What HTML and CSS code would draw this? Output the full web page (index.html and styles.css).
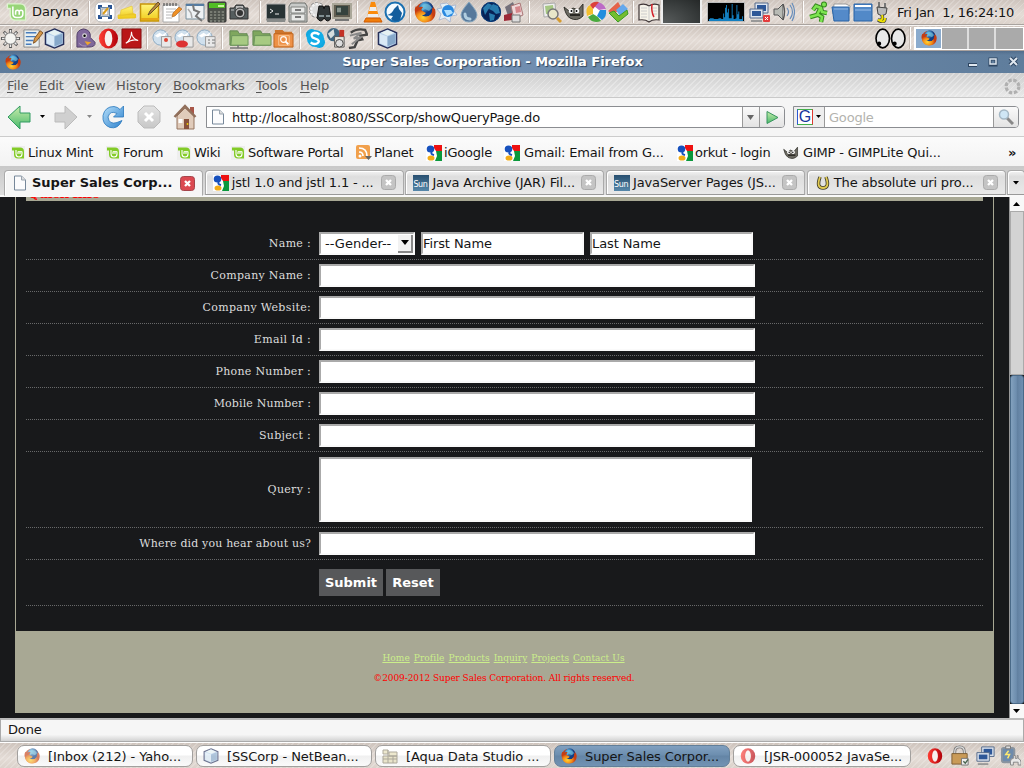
FILE: index.html
```html
<!DOCTYPE html>
<html lang="en">
<head>
<meta charset="utf-8">
<title>Super Sales Corporation - Mozilla Firefox</title>
<link rel="stylesheet" href="styles.css">
</head>
<body>
<svg class="defs" width="0" height="0" aria-hidden="true">
<defs>
<linearGradient id="gBlue" x2="1" y2="1"><stop stop-color="#b8e0fa"/><stop offset="1" stop-color="#2a80cd"/></linearGradient>
<linearGradient id="gYellow" x2="0" y2="1"><stop stop-color="#fff47a"/><stop offset="1" stop-color="#f0cb19"/></linearGradient>
<linearGradient id="gGreen" x2="0" y2="1"><stop stop-color="#c9ecac"/><stop offset="1" stop-color="#48b96b"/></linearGradient>
<linearGradient id="gGrey" x2="0" y2="1"><stop stop-color="#e3e3e3"/><stop offset="1" stop-color="#c7c7c7"/></linearGradient>
<radialGradient id="gGlobe" cx=".35" cy=".3"><stop stop-color="#69c8f2"/><stop offset="1" stop-color="#123f85"/></radialGradient>
<radialGradient id="gFox" cx=".4" cy=".7"><stop stop-color="#ffd531"/><stop offset=".6" stop-color="#f38b18"/><stop offset="1" stop-color="#c63d12"/></radialGradient>
<linearGradient id="gRed" x2="1"><stop stop-color="#ff3e34"/><stop offset="1" stop-color="#b10009"/></linearGradient>
</defs>
<symbol id="mint" viewBox="0 0 22 22"><path d="M1 2h14q6 0 6 6v12H10q-6 0-6-6V7H1z" fill="#97d578" stroke="#e0f3d2" stroke-width="1.500"/><path d="M7 5v8q0 4 4 4h3q4 0 4-4v-2q0-2-2-2t-2 2v3m0-3q0-2-2-2t-2 2v3" fill="none" stroke="#fff" stroke-width="1.700"/></symbol>
<symbol id="bmint" viewBox="0 0 14 14"><rect width="14" height="14" fill="#eee"/><path d="M1 1.500h8q4 0 4 4V12.500H7q-4 0-4-4V4.500H1z" fill="#83cb28"/><path d="M5 4v4q0 3 3 3 3 0 3-3V6q-1-1-2 0v2-2q-1-1-2 0v2" fill="none" stroke="#fff" stroke-width="1.100"/></symbol>
<symbol id="desktop" viewBox="0 0 22 22"><rect x="1" y="1" width="20" height="20" rx="6" fill="#fff" stroke="#bbb"/><path d="M5 8V5h3M14 5h3v3M17 14v3h-3M8 17H5v-3" fill="none" stroke="#285393" stroke-width="2"/><rect x="6.500" y="6.500" width="9" height="9" fill="#dfeaf3" stroke="#6d8cad"/><rect x="8" y="8" width="6" height="6" fill="#fff" stroke="#999"/><path d="M9 13l5-6" stroke="#d99b18" stroke-width="2"/></symbol>
<symbol id="notes" viewBox="0 0 22 22"><path d="M2 14l15-2 3 1v4l-18 1z" fill="#efc923"/><path d="M5 9l11-4 1 7-13 3zM2 14h17v3H2z" fill="url(#gYellow)" stroke="#e5c22c" stroke-width=".6"/></symbol>
<symbol id="sticky" viewBox="0 0 22 22"><rect x="1.500" y="3" width="18" height="17" fill="url(#gYellow)" stroke="#c7950b" stroke-width="1.500"/><path d="M2 18h18" stroke="#e7a519" stroke-width="2"/><path d="M9 14l2-4 8-9 2 2-9 9z" fill="#b9883d" stroke="#4b3a25" stroke-width=".8"/></symbol>
<symbol id="notepad" viewBox="0 0 22 22"><path d="M2 4h16v17H2z" fill="#fff" stroke="#aaa"/><path d="M3 2v3m3-3v3m3-3v3m3-3v3m3-3v3" stroke="#555" stroke-width="1.200"/><path d="M5 8h10M5 11h8M5 14h7M5 17h6" stroke="#999" stroke-width=".7"/><path d="M11 16l1-4 6-6 3 2-7 7z" fill="#ee9025" stroke="#a6601d" stroke-width=".6"/></symbol>
<symbol id="crack" viewBox="0 0 22 22"><path d="M2 3h18v15H2z" fill="#eef2f4" stroke="#788f9c"/><path d="M2 4h18" stroke="#557ca2" stroke-width="2"/><path d="M9 4l1 5 5 2-3 4 6 5" fill="none" stroke="#777" stroke-width="2"/><path d="M4 8l3 4 1 5" fill="none" stroke="#aaa" stroke-width="1.500"/></symbol>
<symbol id="calc" viewBox="0 0 22 22"><rect x="2" y="1" width="18" height="20" rx="1" fill="#4d514b" stroke="#333"/><path d="M3 2h16v5H3z" fill="#51bd24"/><path d="M12 5h6" stroke="#c9f59f" stroke-width="2"/><path d="M4 11h14M4 14h14M4 17h14M4 20h14" stroke="#868b81" stroke-width="1.500" stroke-dasharray="2.300 1.600"/></symbol>
<symbol id="camera" viewBox="0 0 22 22"><path d="M2 7h4l2-3h7l2 3h3v11H2z" fill="#555d5e" stroke="#333"/><path d="M8 5h7v3H8z" fill="#bbb"/><circle cx="12" cy="12" r="5" fill="#bbb" stroke="#333"/><circle cx="12" cy="12" r="3" fill="#333"/><path d="M3 9h3" stroke="#bbb"/></symbol>
<symbol id="terminal" viewBox="0 0 22 22"><rect x="1.500" y="3" width="19" height="15" rx="1" fill="#283335" stroke="#aaa"/><path d="M1 18h20l-1 3H2z" fill="#888b8a"/><path d="M5 8l3 2-3 2m5 1h4" fill="none" stroke="#eee"/></symbol>
<symbol id="cabinet" viewBox="0 0 22 22"><path d="M4 2h14l2 3v16H2V5z" fill="#c8cac8" stroke="#6d706d"/><path d="M4 6h14v6H4zM4 13h14v7H4z" fill="#e8e9e7" stroke="#818380"/><path d="M8 9h6M8 16h6" stroke="#777" stroke-width="2"/></symbol>
<symbol id="binoc" viewBox="0 0 22 22"><circle cx="8" cy="9" r="6" fill="none" stroke="#888" stroke-width="4" stroke-dasharray="2.700 1"/><circle cx="8" cy="9" r="6" fill="#ddd" stroke="#f2f2f2" stroke-width="2.500" stroke-dasharray="2.700 1"/><path d="M10 5h4l1 3 1-3h4l2 12q-3 6-7 0-3 6-7 0z" fill="#303637" stroke="#111"/><path d="M10 15h5m2 0h4" stroke="#829093" stroke-width="2"/></symbol>
<symbol id="monitor" viewBox="0 0 22 22"><path d="M2 3h18v14H2z" fill="#625e51" stroke="#aaa799" stroke-width="2"/><path d="M5 5h12v9H5z" fill="#35423d"/><path d="M6 8h4m-4 2h4M7 6.500v5m2-5v5" stroke="#c5d1c8" stroke-width=".7"/><path d="M4 19h14" stroke="#777" stroke-width="2"/></symbol>
<symbol id="cone" viewBox="0 0 22 22"><path d="M9 1h4l4 15H5z" fill="#fb8b0b"/><path d="M8 6h6l1 4H7zM6 13h10l1 3H5z" fill="#eee"/><path d="M4 17h14l2 4H2z" fill="#f07d0a" stroke="#d05a00"/></symbol>
<symbol id="wolf" viewBox="0 0 22 22"><circle cx="11" cy="11" r="9.500" fill="#f5fbff" stroke="#1a70b1" stroke-width="2"/><path d="M3 14q5-1 7-6l4-4 1 4 3 4-2 7q-5 3-9-1l2-3z" fill="#135d9c"/></symbol>
<symbol id="firefox" viewBox="0 0 22 22"><circle cx="11" cy="11" r="10" fill="url(#gFox)"/><circle cx="12" cy="8" r="7.500" fill="url(#gGlobe)"/><path d="M10 3q5-1 8 4l-3 3-4-2-3 2-1-4z" fill="#71bdd9" opacity=".7"/><path d="M2 5l2 2q2-2 5-1L7 9l5 3q-3 4-6 1 3 5 9 2 4-3 3-8l3 1q2 8-4 12-9 4-14-3Q-1 9 2 5z" fill="url(#gFox)"/></symbol>
<symbol id="swift" viewBox="0 0 22 22"><path d="M11 2l3 3 6-1-2 6 3 4-6 1-1 6-5-4-6 2 2-6-4-5 5-1-2-4z" fill="#e5eff5" stroke="#9ac" stroke-width=".7"/><circle cx="12" cy="10" r="6" fill="#2988df"/><path d="M8 9h7l2 3-6 3z" fill="#addfff"/></symbol>
<symbol id="drop" viewBox="0 0 22 22"><path d="M11 1q8 9 8 13-1 7-8 7t-8-7q0-4 8-13z" fill="#56789b" stroke="#87a6bd"/><path d="M7 13q0 5 5 5" fill="none" stroke="#b0cde0" stroke-width="3" stroke-linecap="round"/></symbol>
<symbol id="globe" viewBox="0 0 22 22"><circle cx="11" cy="11" r="10" fill="#082155"/><path d="M3 7l5-5 4 2-4 5-3 5zM13 3l5 2 2 7-4 1-3-3-4-2zM9 12l6 2-1 5-4 1z" fill="#287bad"/><circle cx="11" cy="11" r="9.500" fill="none" stroke="#073c7b"/></symbol>
<symbol id="cards" viewBox="0 0 22 22"><path d="M3 6l8-5 4 10-9 4z" fill="#74707a"/><path d="M9 5l9-3 3 12-9 4z" fill="#eed7d8" stroke="#a77"/><path d="M13 6l5-1 1 6-5 1z" fill="#d5868b"/><path d="M2 14l8-2v7l-8 1z" fill="#9c2936"/><path d="M10 14h8v7h-8z" fill="#ddd" stroke="#777"/></symbol>
<symbol id="photos" viewBox="0 0 22 22"><path d="M2 3l12-1 1 13-12 1z" fill="#eee" stroke="#aaa"/><path d="M4 5l8-1 1 8-8 1z" fill="#a6c783"/><circle cx="12" cy="13" r="5" fill="#e8e7c9" stroke="#777" stroke-width="1.500"/><path d="M16 17l4 4" stroke="#d49b31" stroke-width="3"/></symbol>
<symbol id="gimp" viewBox="0 0 22 22"><path d="M1 6l5 4 4-3 5 2 5-6v12q-6 6-13 2-4-2-6-11z" fill="#6b6961" stroke="#34342f"/><circle cx="8" cy="10" r="2.300" fill="#fff"/><circle cx="14" cy="10" r="2.300" fill="#fff"/><circle cx="8.500" cy="10" r="1"/><circle cx="13.500" cy="10" r="1"/><path d="M7 14h10" stroke="#292824" stroke-width="2"/></symbol>
<symbol id="picasa" viewBox="0 0 22 22"><circle cx="11" cy="11" r="9" fill="#fff"/><path d="M11 1q7 0 10 7l-7 1-5-4z" fill="#bc6ac6"/><path d="M21 9q1 7-4 10l-5-4 3-6z" fill="#218ddd"/><path d="M16 20q-9 3-13-4l5-3 5 3z" fill="#4aaa3e"/><path d="M2 15Q0 6 5 4l3 4v5z" fill="#f4c02e"/><path d="M5 4q3-4 9-3l-6 7z" fill="#dc3f3b"/></symbol>
<symbol id="boxes" viewBox="0 0 22 22"><path d="M1 10l10-9 3 5-7 8z" fill="#e56349"/><path d="M9 9l7-6 5 5-8 7z" fill="#63a8ed"/><path d="M2 12l5-2 5 5 8-6 1 4-10 8z" fill="#75bd30" stroke="#399b28"/></symbol>
<symbol id="book" viewBox="0 0 22 22"><path d="M1 4q6-2 10 1 4-3 10-1v15q-6-1-10 2-4-3-10-2z" fill="#f6f3e9" stroke="#3e3436" stroke-width="1.200"/><path d="M11 5v15M3 7h6m-6 3h6m-6 3h6m-6 3h6m5-9h5m-5 3h5m-5 3h5" stroke="#ccc"/><path d="M14 3q-1 8 2 13" stroke="#d5242d" stroke-width="1.500" fill="none"/></symbol>
<symbol id="network" viewBox="0 0 22 22"><path d="M7 2h13v10H7z" fill="#dde4ee" stroke="#566b8b"/><path d="M9 4h9v6H9z" fill="#2d5798"/><path d="M2 8h13v9H2z" fill="#dde4ee" stroke="#566b8b"/><path d="M4 10h9v5H4z" fill="#2d5798"/><path d="M3 20h11" stroke="#999" stroke-width="2"/></symbol>
<symbol id="speaker" viewBox="0 0 22 22"><path d="M1 8h4l5-5v16l-5-5H1z" fill="#b8bbb5" stroke="#555"/><path d="M10 3q3 8 0 16" fill="#ddd" stroke="#555" stroke-width="1.500"/><path d="M14 7q3 4 0 8m3-11q5 7 0 14m2-16q5 9 0 18" fill="none" stroke="#698eba" stroke-width="1.200"/></symbol>
<symbol id="runner" viewBox="0 0 22 22"><g fill="none" stroke="#348a1c" stroke-width="4.500"><path d="M5 9l3-4 5 2 1 4 5 1M12 8l-3 6-7 2M9 13l5 3-1 5"/></g><circle cx="16" cy="3.500" r="3" fill="#348a1c"/><g fill="none" stroke="#7de451" stroke-width="2.500"><path d="M5 9l3-4 5 2 1 4 5 1M12 8l-3 6-7 2M9 13l5 3-1 5"/></g><circle cx="16" cy="3.500" r="2" fill="#7de451"/></symbol>
<symbol id="bfolder" viewBox="0 0 22 22"><path d="M4 3h12l4 2-1 8H3z" fill="#fff" stroke="#999"/><path d="M2 6h17v14H4z" fill="#548ac9" stroke="#2863a5"/><path d="M4 8h14" stroke="#92b8e4"/></symbol>
<symbol id="wfolder" viewBox="0 0 22 22"><path d="M2 3h18v17H2z" fill="#5289c8" stroke="#2863a5"/><path d="M3 4h16v2H3z" fill="#fff"/><path d="M3 9h16" stroke="#96bce8"/></symbol>
<symbol id="plug" viewBox="0 0 16 22"><path d="M5 1v6m6-5v5" stroke="#777" stroke-width="2"/><path d="M3 6l10 1-1 6-4 2-4-2z" fill="#bbb" stroke="#444"/><path d="M8 14q2 6-4 5 7 4 7-2" fill="none" stroke="#444" stroke-width="3.500"/><path d="M8 14q2 6-4 5 7 4 7-2" fill="none" stroke="#eee100" stroke-width="2"/></symbol>
<symbol id="sun" viewBox="0 0 22 22"><path d="M11 1v20M1 11h20M4 4l14 14M4 18L18 4" stroke="#555" stroke-width="3"/><path d="M11 2v18M2 11h18M4.700 4.700l12.600 12.600M4.700 17.300L17.300 4.700" stroke="#eee" stroke-width="1.500"/><circle cx="11" cy="11" r="6" fill="#f4f4f1" stroke="#777"/></symbol>
<symbol id="editor" viewBox="0 0 22 22"><path d="M2 2h16v18H2z" fill="#e9efef" stroke="#888"/><path d="M4 5h11M4 9h11M4 13h8M4 17h6" stroke="#487cbc" stroke-width="1.500"/><path d="M12 16l1-5 6-8 3 2-7 9z" fill="#d79848" stroke="#805323"/></symbol>
<symbol id="cube" viewBox="0 0 22 22"><path d="M11 1l9.500 4v12L11 21 1.500 17V5z" fill="#b6d0ea" stroke="#262f5a" stroke-width="1.500"/><path d="M3 6l8 3v10l-8-3z" fill="#d9e9f6"/><path d="M11 9l8-3v10l-8 3z" fill="#86a8ca"/><path d="M4 5l7-3 7 3-7 3z" fill="#e6f2f3"/></symbol>
<symbol id="pidgin" viewBox="0 0 22 22"><path d="M2 20V8q0-6 7-7 8 1 7 9l5 5q1 5-7 5z" fill="#80689b" stroke="#503e68"/><circle cx="10" cy="8" r="2.500" fill="#ddd"/><circle cx="10" cy="8" r="1.300"/><path d="M10 14l7 1-4 3z" fill="#eda52d"/><path d="M4 16q4 4 8 3" fill="none" stroke="#b09bbf"/></symbol>
<symbol id="opera" viewBox="0 0 22 22"><ellipse cx="11" cy="11" rx="10" ry="10.500" fill="url(#gRed)"/><ellipse cx="11" cy="11" rx="4" ry="8" fill="#f6f1ef"/></symbol>
<symbol id="acrobat" viewBox="0 0 22 22"><path d="M1 1h20v20H1z" fill="#b91618" stroke="#830f12"/><path d="M5 16q6-4 6-12 0 7 7 9-6-2-13 3z" fill="none" stroke="#fff" stroke-width="1.100"/></symbol>
<symbol id="office" viewBox="0 0 22 22"><circle cx="9" cy="10" r="8" fill="#d0e0ed" stroke="#8ba9c2"/><path d="M3 8l5-3 3 2 5-3-3 5-4-1-3 2z" fill="#fff"/><path d="M10 9h10v11H10z" fill="#e9e9e9" stroke="#999"/></symbol>
<symbol id="gfolder" viewBox="0 0 22 22"><path d="M2 3h8l2 3h8v12H2z" fill="#7fa75e" stroke="#638753"/><path d="M4 8h17v10H3z" fill="#a7ca82" stroke="#6b945a"/></symbol>
<symbol id="sfolder" viewBox="0 0 22 22"><path d="M2 2h8l2 2h8v16H2z" fill="#cc752d"/><path d="M1 6h20v14H1z" fill="#ee9147" stroke="#bd641d"/><circle cx="11" cy="12" r="3" fill="none" stroke="#fff" stroke-width="1.200"/><path d="M6 8h11v10H6z" fill="none" stroke="#f9c796"/><path d="M13 14l3 3" stroke="#fff" stroke-width="2"/></symbol>
<symbol id="skype" viewBox="0 0 22 22"><circle cx="7" cy="7" r="6" fill="#10a7df"/><circle cx="15" cy="15" r="6" fill="#10a7df"/><circle cx="11" cy="11" r="9" fill="#12ade7"/><path d="M15 7q-2-2-5-2-5 1-2 5l5 2q3 2 0 4-4 2-7-1" fill="none" stroke="#fff" stroke-width="2.500"/></symbol>
<symbol id="kopete" viewBox="0 0 22 22"><circle cx="8" cy="7" r="7" fill="#406680"/><path d="M2 6l6-5 1 6-4 4z" fill="#d6dfdf"/><path d="M9 9h10v11H9z" fill="#e7e4dc" stroke="#555"/><path d="M14 2h5v7h-5z" fill="#c43125"/><circle cx="14" cy="16" r="4" fill="#ddd" stroke="#444"/></symbol>
<symbol id="metal" viewBox="0 0 22 22"><path d="M4 5q6-5 15-3l2 5-7 1 2 4-5 1-3 7-6 1" fill="none" stroke="#444" stroke-width="2.500"/><path d="M3 8l12-3-8 6 7-1-9 7" fill="none" stroke="#888" stroke-width="2"/></symbol>
<symbol id="google" viewBox="0 0 16 16"><path d="M0 0h16v16H0z" fill="#fff"/><path d="M8 0h8v6h-6L8 3z" fill="#e11"/><path d="M10 6h6v10H9l2-5z" fill="#0a983c"/><ellipse cx="4.500" cy="4" rx="3.800" ry="3.500" fill="#1650bd"/><ellipse cx="5" cy="13" rx="3.500" ry="2.600" fill="#f2ac17"/><path d="M6 7q-2 2 2 3" fill="none" stroke="#1650bd" stroke-width="2"/></symbol>
<symbol id="page" viewBox="0 0 14 16"><path d="M1.500 1h7l4 4v10h-11z" fill="#fcfcfd" stroke="#77889a"/><path d="M8.500 1v4h4" fill="#ddd" stroke="#9aa5b0"/></symbol>
<symbol id="rss" viewBox="0 0 16 16"><rect width="14" height="14" rx="2" fill="#f1a04c"/><circle cx="4" cy="11" r="1.500" fill="#fff"/><path d="M3 7q4 0 4 4M3 3q8 0 8 8" stroke="#fff" stroke-width="1.700" fill="none"/><path d="M9 11h7l-3.500 4z" fill="#666"/></symbol>
<symbol id="horseshoe" viewBox="0 0 16 16"><path d="M5 2q-4 11 3 11t3-11" fill="none" stroke="#3f3c29" stroke-width="3.500"/><path d="M5 2q-4 11 3 11t3-11" fill="none" stroke="#e2cb52" stroke-width="1.800"/></symbol>
<symbol id="close" viewBox="0 0 15 15"><rect x=".5" y=".5" width="14" height="14" rx="3"/><path d="M5 5l5 5m0-5l-5 5" stroke="#fff" stroke-width="2.300"/></symbol>
<symbol id="tree" viewBox="0 0 16 16"><path d="M1 2h5v4H1zM7 4h8v4H7zM1 8h14v7H1z" fill="#e4dcb4" stroke="#857e6a"/><path d="M1 11h14M6 2v13m5-7v7" stroke="#857e6a"/></symbol>
<symbol id="lock" viewBox="0 0 22 22"><path d="M5 10V7q0-5 5-5t5 5v3" fill="none" stroke="#777" stroke-width="3"/><path d="M5 10V7q0-5 5-5t5 5v3" fill="none" stroke="#ddd" stroke-width="1.300"/><path d="M2 9h16v11H2z" fill="#c99a57" stroke="#7d5d34"/><path d="M12 14h7v7h-7z" fill="#eee" stroke="#777"/><path d="M14 17l2 2 3-4" stroke="#4b6651" fill="none" stroke-width="1.500"/></symbol>
<symbol id="battery" viewBox="0 0 22 22"><rect x="2" y="3" width="13" height="15" rx="2" fill="#6e8bac" stroke="#8a949e" stroke-width="2"/><path d="M6 1h5v3H6z" fill="#ddd" stroke="#777"/><path d="M9 6l-3 4h4l-2 4" fill="none" stroke="#ffe96d" stroke-width="1.500"/><path d="M11 21v-4q0-3 3-3v-3h2v3h2v-3h1v3q3 1 3 4v3h-3v-3h-5v3z" fill="#e8e8e8" stroke="#888"/></symbol>
</svg>

<header class="panel launcher">
  <div class="mintmenu"><svg><use href="#mint"/></svg><span>Daryna</span></div>
  <i class="sep"></i>
  <div class="icons first"><svg><use href="#desktop"/></svg><svg><use href="#notes"/></svg><svg><use href="#sticky"/></svg><svg><use href="#notepad"/></svg><svg><use href="#crack"/></svg><svg><use href="#calc"/></svg><svg><use href="#camera"/></svg></div>
  <i class="sep"></i>
  <div class="icons"><svg><use href="#terminal"/></svg><svg><use href="#cabinet"/></svg><svg><use href="#binoc"/></svg><svg><use href="#monitor"/></svg></div>
  <i class="sep"></i>
  <div class="icons"><svg><use href="#cone"/></svg><svg><use href="#wolf"/></svg></div>
  <i class="sep"></i>
  <div class="icons apps"><svg><use href="#firefox"/></svg><svg><use href="#swift"/></svg><svg><use href="#drop"/></svg><svg><use href="#globe"/></svg><svg><use href="#cards"/></svg></div>
  <i class="sep"></i>
  <div class="icons graphics"><svg><use href="#photos"/></svg><svg><use href="#gimp"/></svg><svg><use href="#picasa"/></svg><svg><use href="#boxes"/></svg></div>
  <i class="sep"></i>
  <div class="icons"><svg><use href="#book"/></svg></div>
  <div class="dark-widget"></div>
  <svg class="cpu" viewBox="0 0 36 19"><path d="M0 17h1v-1h4v1h5v-1h3v1h2v-6h1v4h1V5h1V2h1v8h1V6h1v10h3V1h1v12h1v4h2v-1h1V2h1v10h1V9h1v8h3v-3h1v5H0z" fill="#137fc0"/></svg>
  <div class="status-icons"><svg><use href="#network"/><rect x="15" y="14" width="7" height="7" rx="1" fill="#e33d3d"/><path d="M17 16l3 3m0-3l-3 3" stroke="#fff"/></svg><svg><use href="#speaker"/></svg></div>
  <i class="sep"></i>
  <div class="icons trayset"><svg><use href="#runner"/></svg><svg><use href="#bfolder"/></svg><svg><use href="#wfolder"/></svg><svg class="narrow"><use href="#plug"/></svg></div>
  <time>Fri Jan&nbsp; 1, 16:24:10</time>
</header>

<div class="panel second">
  <div class="icons wide64"><svg><use href="#sun"/></svg><svg><use href="#editor"/></svg><svg><use href="#cube"/></svg></div>
  <i class="sep"></i>
  <div class="icons wide70"><svg><use href="#pidgin"/></svg><svg><use href="#opera"/></svg><svg><use href="#acrobat"/></svg></div>
  <i class="sep"></i>
  <div class="icons wide66"><svg><use href="#office"/><circle cx="14" cy="12" r="2" fill="#d43"/></svg><svg><use href="#office"/><ellipse cx="8" cy="16" rx="6" ry="3.500" fill="#d33"/></svg><svg><use href="#office"/><path d="M12 12h2m2 0h3m-7 3h2m2 0h3" stroke="#777"/></svg></div>
  <i class="sep"></i>
  <div class="icons wide68"><svg><use href="#gfolder"/><path d="M2 20h18M10 17v3" stroke="#777" stroke-width="1.500"/></svg><svg><use href="#gfolder"/></svg><svg><use href="#sfolder"/></svg></div>
  <i class="sep"></i>
  <div class="icons wide64b"><svg><use href="#skype"/></svg><svg><use href="#kopete"/></svg><svg><use href="#metal"/></svg></div>
  <i class="sep"></i>
  <div class="icons"><svg><use href="#cube"/></svg></div>
  <svg class="eyes" viewBox="0 0 30 20"><ellipse cx="7.500" cy="10" rx="6.500" ry="9" fill="#e8e8e8" stroke="#000" stroke-width="1.600"/><ellipse cx="22.500" cy="10" rx="6.500" ry="9" fill="#e8e8e8" stroke="#000" stroke-width="1.600"/><circle cx="4" cy="15" r="2"/><circle cx="19" cy="15" r="2"/></svg>
  <i class="sep"></i>
  <div class="pager"><b><svg><use href="#firefox"/></svg></b><b></b><b></b><b></b></div>
</div>

<div class="titlebar">
  <svg class="appicon"><use href="#firefox"/></svg>
  <h1>Super Sales Corporation - Mozilla Firefox</h1>
  <svg class="wm" viewBox="0 0 50 12"><g fill="none" stroke="#2d4561" stroke-width="4"><path d="M0 9h9"/><path d="M22 3h6v6h-6z" stroke-width="3"/><path d="M42 2l7 7m0-7l-7 7"/></g><g fill="none" stroke="#dfe7ef" stroke-width="2"><path d="M1 9h8"/><path d="M22 3h6v5h-6z" stroke-width="1.500"/><path d="M42 2l7 7m0-7l-7 7"/></g></svg>
</div>

<nav class="menubar"><span><u>F</u>ile</span><span><u>E</u>dit</span><span><u>V</u>iew</span><span>Hi<u>s</u>tory</span><span><u>B</u>ookmarks</span><span><u>T</u>ools</span><span><u>H</u>elp</span><svg class="throbber" viewBox="0 0 16 16"><circle cx="8" cy="8" r="6" fill="none" stroke="#b0b0b0" stroke-width="3" stroke-dasharray="3.200 1.510"/></svg></nav>

<div class="navbar">
  <svg class="navicons" viewBox="0 0 206 38">
    <path d="M8 19L20 8v7h10v9H20v7z" fill="url(#gGreen)" stroke="#309b62"/><path d="M40 17h5l-2.500 3z"/>
    <path d="M77 19L65 8v7H55v9h10v7z" fill="#d0d0d0" stroke="#bbb"/><path d="M87 17h5l-2.500 3z" fill="#888"/>
    <path d="M123.500 8v11h-10l3.500-3.500q-7-3.500-9 3.500 1 8 9 5.500l5-2q-4 9-12 7-8-3-7-12 2-9 11-9 4 .5 6 3z" fill="url(#gBlue)" stroke="#2877bd" stroke-width=".8"/>
    <path d="M144 8h10l6 6v10l-6 6h-10l-6-6V14z" fill="url(#gGrey)" stroke="#bbb"/><path d="M145 15l8 8m0-8l-8 8" stroke="#fff" stroke-width="3"/>
    <path d="M190 9h4v8h-4z" fill="#a85648"/><path d="M177 18l8-8 9 8v13h-17z" fill="#e0cbba" stroke="#95745f"/><path d="M174.500 19L185 8l10.500 11" fill="none" stroke="#916f5b" stroke-width="2.500"/><path d="M184 21h5v10h-5z" fill="#88523d"/><path d="M178.500 21h4v4h-4z" fill="#fff"/><circle cx="187.500" cy="26" r=".9" fill="#ec0"/>
  </svg>
  <div class="urlbar"><svg class="pageicon"><use href="#page"/></svg><span class="url">http://localhost:8080/SSCorp/showQueryPage.do</span><b class="drop"><svg viewBox="0 0 8 5"><path d="M0 0h7L3.500 5z" fill="#666"/></svg></b><b class="go"><svg viewBox="0 0 12 12"><path d="M1 0l11 6-11 6z" fill="url(#gGreen)" stroke="#37945e"/></svg></b></div>
  <div class="search"><b class="engine"><i>G</i><svg viewBox="0 0 6 4"><path d="M0 0h5L2.500 3z"/></svg></b><span>Google</span><b class="magnify"><svg viewBox="0 0 16 16"><path d="M8 8l7 7" stroke="#888" stroke-width="3"/><circle cx="6" cy="5.500" r="4.500" fill="#cfe6f5" stroke="#a5b8c5" stroke-width="1.500"/></svg></b></div>
</div>

<nav class="bookmarks">
  <a><svg><use href="#bmint"/></svg>Linux Mint</a><a><svg><use href="#bmint"/></svg>Forum</a><a><svg><use href="#bmint"/></svg>Wiki</a><a><svg><use href="#bmint"/></svg>Software Portal</a><a class="big"><svg><use href="#rss"/></svg>Planet</a><a class="big"><svg><use href="#google"/></svg>iGoogle</a><a class="big more"><svg><use href="#google"/></svg>Gmail: Email from G...</a><a class="big"><svg><use href="#google"/></svg>orkut - login</a><a class="big more"><svg><use href="#gimp"/></svg>GIMP - GIMPLite Qui...</a><span class="chev">»</span>
</nav>

<div class="tabs">
  <div class="tab active"><svg><use href="#page"/></svg><span>Super Sales Corp...</span><svg class="x"><use href="#close"/></svg></div>
  <div class="tab"><svg><use href="#google"/></svg><span>jstl 1.0 and jstl 1.1 - ...</span><svg class="x"><use href="#close"/></svg></div>
  <div class="tab"><em>Sun</em><span>Java Archive (JAR) Fil...</span><svg class="x"><use href="#close"/></svg></div>
  <div class="tab"><em>Sun</em><span>JavaServer Pages (JS...</span><svg class="x"><use href="#close"/></svg></div>
  <div class="tab"><svg><use href="#horseshoe"/></svg><span>The absolute uri pro...</span><svg class="x"><use href="#close"/></svg></div>
  <div class="tab list"><svg viewBox="0 0 6 4"><path d="M0 0h6L3 3.500z"/></svg></div>
</div>

<main class="viewport">
  <div class="site">
    <form class="content">
      <div class="heading"><h2>Quick Info</h2></div>
      <div class="row name"><label>Name :</label><div class="field"><span class="select">--Gender--<b><svg viewBox="0 0 8 5"><path d="M0 0h8L4 5z"/></svg></b></span><span class="input half">First Name</span><span class="input half">Last Name</span></div></div>
      <div class="row"><label>Company Name :</label><div class="field"><span class="input"></span></div></div>
      <div class="row"><label>Company Website:</label><div class="field"><span class="input"></span></div></div>
      <div class="row"><label>Email Id :</label><div class="field"><span class="input"></span></div></div>
      <div class="row"><label>Phone Number :</label><div class="field"><span class="input"></span></div></div>
      <div class="row"><label class="long">Mobile Number :</label><div class="field"><span class="input"></span></div></div>
      <div class="row"><label>Subject :</label><div class="field"><span class="input"></span></div></div>
      <div class="row query"><label>Query :</label><div class="field"><span class="input area"></span></div></div>
      <div class="row"><label class="long">Where did you hear about us?</label><div class="field"><span class="input"></span></div></div>
      <div class="row actions"><label></label><div class="field"><button type="button" class="submit">Submit</button><button type="button" class="reset">Reset</button></div></div>
    </form>
    <footer><div class="links"><a>Home</a><a>Profile</a><a>Products</a><a>Inquiry</a><a>Projects</a><a>Contact Us</a></div><p>©2009-2012 Super Sales Corporation. All rights reserved.</p></footer>
  </div>
  <div class="scrollbar"><b><svg viewBox="0 0 8 5"><path d="M0 4h7L3.500 0z"/></svg></b><i class="track"></i><i class="thumb"></i><b><svg viewBox="0 0 8 5"><path d="M0 0h7L3.500 4z"/></svg></b></div>
</main>

<div class="statusbar">Done</div>

<footer class="panel taskbar">
  <div class="task"><svg class="faded"><use href="#firefox"/></svg>[Inbox (212) - Yaho...</div>
  <div class="task"><svg class="faded"><use href="#cube"/></svg>[SSCorp - NetBean...</div>
  <div class="task"><svg class="faded"><use href="#tree"/></svg>[Aqua Data Studio ...</div>
  <div class="task current"><svg><use href="#firefox"/></svg>Super Sales Corpor...</div>
  <div class="task last"><svg class="faded"><use href="#opera"/></svg>[JSR-000052 JavaSe...</div>
  <div class="tray"><svg class="small"><use href="#opera"/></svg><svg><use href="#lock"/></svg><svg><use href="#network"/></svg><svg><use href="#battery"/></svg></div>
</footer>
</body>
</html>
```
FILE: styles.css
```css
* { box-sizing: border-box; }
body { margin: 0; width: 1024px; height: 768px; overflow: hidden; display: flex; flex-direction: column; font: 13px/16px "DejaVu Sans", sans-serif; color: #151515; background: #18191b; white-space: nowrap; }
svg { display: block; flex: none; }
.defs { position: absolute; }
.panel { display: flex; align-items: center; flex: none; background: repeating-linear-gradient(135deg, transparent 0 3px, rgba(255,255,255,.2) 3px 4.250px), linear-gradient(#cec4bd, #e4dcd6 60%, #dbd2cb); }
.launcher { height: 25px; border-bottom: 1px solid #a9a39f; }
.sep { width: 2px; height: 22px; margin: 0 3px; flex: none; border-left: 1px solid #c4bab3; border-right: 1px solid #fff; }
.icons { display: flex; flex: none; }
.icons svg { width: 22px; height: 22px; }
.mintmenu { display: flex; align-items: center; width: 85px; padding-left: 6px; gap: 5px; }
.mintmenu svg { width: 21px; height: 20px; }
.mintmenu span { letter-spacing: -.1px; }
.first { width: 163px; gap: .4px; padding-left: 1px; }
.launcher .icons:not(.first) { padding-left: 1px; }
.launcher .icons.apps { padding-left: 0; padding-right: 1px; }
.launcher .icons.graphics { padding-left: 8px; }
.dark-widget { width: 41px; height: 24px; margin-left: 1px; border: 1px solid #eee; border-width: 0 2px 1px; background: radial-gradient(ellipse at bottom left, #595d5d, #343838 70%, #252828); flex: none; }
.cpu { width: 38px; height: 20px; margin-left: 5px; background: #000; border: 1px solid #bbb; }
.status-icons { display: flex; gap: 3px; margin-left: 3px; width: 51px; }
.status-icons svg { width: 22px; height: 22px; }
.trayset { width: 86px; }
.trayset .narrow { width: 16px; }
time { margin-left: 4px; letter-spacing: -.3px; padding-top: 1px; }
.second { height: 26px; border-top: 1px solid #f7f4f2; border-bottom: 1px solid #aaa29e; }
.second .icons svg { width: 21px; height: 21px; }
.wide64 { width: 67px; gap: 1px; }
.wide70 { width: 68px; gap: 2px; }
.wide66 { width: 67px; gap: 1px; padding-left: 1px; }
.wide68 { width: 70px; gap: 1.500px; padding-left: 2px; }
.wide64b { width: 65px; padding-left: 1px; }
.eyes { width: 31px; height: 21px; margin-left: auto; }
.pager { width: 110px; height: 23px; display: grid; grid-template-columns: 27px 27px 27px 28px; border: 1px solid #fff; background: #aaa; flex: none; }
.pager b { border-right: 2px solid #ddd; }
.pager b:first-child { background: #8babcd; border: 1px solid #fff; display: grid; place-items: center; }
.pager b:last-child { border: 0; }
.pager svg { width: 16px; height: 16px; }
.titlebar { height: 22px; display: flex; align-items: center; background: linear-gradient(rgba(40,60,90,.25), transparent 4px), linear-gradient(90deg, #5d7b9b, #7390b2 45%, #5f7d9c); flex: none; padding: 0 6px 0 5px; }
.appicon { width: 16px; height: 16px; }
h1 { flex: 1; margin: 0; text-align: center; color: #fff; font: bold 13px/20px "DejaVu Sans", sans-serif; text-shadow: 1px 1px 1px #2d435d; padding-right: 4px; }
.wm { width: 50px; height: 12px; }
.menubar { height: 25px; display: grid; grid-template-columns: 32px 36px 41px 57px 83px 44px 1fr 18px; padding: 2px 2px 0 7px; align-items: center; flex: none; color: #555; border-bottom: 1px solid #c9c9c9; background: repeating-linear-gradient(135deg, transparent 0 3px, rgba(255,255,255,.28) 3px 4.250px), linear-gradient(#cfcfcf, #e9e9e9); }
.menubar span { letter-spacing: -.1px; }
u { text-underline-offset: 2px; }
.throbber { width: 17px; height: 17px; }
.navbar { height: 39px; display: flex; align-items: center; background: #f5f5f5; border-bottom: 1px solid #ccc; flex: none; }
.navicons { width: 206px; height: 38px; }
.urlbar, .search { height: 22px; border: 1px solid #8b8d91; background: #fff; display: flex; align-items: center; border-radius: 0 4px 4px 0; overflow: hidden; }
.urlbar { width: 579px; }
.pageicon { width: 14px; height: 16px; margin: 0 7px 0 4px; }
.url { flex: 1; letter-spacing: -.19px; padding-top: 1px; }
.drop, .go, .magnify { height: 20px; border-left: 1px solid #999; background: linear-gradient(#fafafa, #e3e3e3); display: grid; place-items: center; }
.drop { width: 17px; } .drop svg { width: 8px; height: 5px; }
.go { width: 25px; } .go svg { width: 12px; height: 13px; }
.search { width: 226px; margin-left: 8px; color: #b3b3ae; }
.engine { width: 31px; height: 20px; display: flex; align-items: center; gap: 3px; padding-left: 3px; border-right: 1px solid #999; background: #eee; }
.engine i { width: 16px; height: 16px; border: 1px solid #2c58d3; border-top-color: #42af4a; border-right-color: #de3930; border-bottom-color: #42af4a; background: #fff; color: #16359c; font: 16px/14px "Liberation Sans", sans-serif; text-align: center; }
.engine svg { width: 6px; height: 4px; }
.search span { flex: 1; padding: 1px 0 0 4px; letter-spacing: -.2px; }
.magnify { width: 25px; } .magnify svg { width: 16px; height: 16px; }
.bookmarks { height: 30px; padding: 2px 0 0 11px; display: grid; grid-template-columns: 95px 71px 54px 125px 70px 78px 173px 106px 1fr 16px; align-items: center; background: linear-gradient(#fbfbfb, #f3f3f3); border-bottom: 1px solid #c9c9c9; flex: none; }
.bookmarks a { display: flex; align-items: center; gap: 3px; letter-spacing: -.22px; }
.bookmarks svg { width: 14px; height: 14px; }
.bookmarks .big svg { width: 16px; height: 16px; }
.bookmarks .big { gap: 2px; }
.bookmarks .more { gap: 4px; letter-spacing: -.17px; }
.chev { font-weight: bold; }
.tabs { height: 30px; padding: 3px 0 0 4px; display: grid; grid-template-columns: repeat(4, 199px) 199px 18px; column-gap: 1.700px; background: linear-gradient(#c9c9c9, #dedede); border-bottom: 2px solid #f9f9f9; flex: none; }
.tab { height: 25px; display: flex; align-items: center; padding: 0 7px 0 7px; border: 1px solid #aaa; border-bottom-color: #999; border-radius: 4px 4px 0 0; background: linear-gradient(#f3f3f3, #dedede 25%, #e9e9e9); box-shadow: inset 1px 1px #fff; }
.tab > svg:first-child, .tab em { width: 16px; height: 16px; margin-right: 3px; }
.tab span { flex: 1; letter-spacing: -.15px; }
.tab.active { background: #f6f6f6; font-weight: bold; border-bottom-color: #f6f6f6; height: 26px; }
.tab.active span { letter-spacing: 0; padding-left: 1px; }
.tab em { flex: none; background: linear-gradient(#284f70, #5687a9); color: #fff; font: 8px/12px "DejaVu Sans", sans-serif; padding-top: 4px; letter-spacing: -.4px; }
.tab .x { width: 15px; height: 15px; fill: #c4c4c4; stroke: #aaa; }
.tab.active .x { fill: #db4951; stroke: #a4454b; }
.tab.list { padding: 0; justify-content: center; }
.tab.list > svg { width: 6px; height: 4px; margin: 0; }
.viewport { height: 521px; display: flex; justify-content: space-between; background: #18191b; flex: none; }
.site { width: 979px; margin-left: 15px; font-family: "DejaVu Serif", serif; }
.content { height: 434px; border: 1px solid #a8a894; border-width: 0 1px; padding: 0 10px; margin: 0; }
.heading { height: 4px; background: #a8a894; overflow: hidden; display: flex; align-items: flex-end; margin-bottom: 27px; }
h2 { margin: 0 0 0 2px; font: bold 13px/14px "DejaVu Serif", serif; letter-spacing: -.5px; color: red; height: 14px; }
.row { height: 32px; display: flex; border-bottom: 1px dotted #68696a; align-items: center; }
.row label { width: 286px; padding-right: 1px; text-align: right; color: #ddd; font-size: 11px; line-height: 14px; letter-spacing: .3px; }
.row .long { letter-spacing: .15px; }
.field { margin-left: 7px; display: flex; gap: 6px; }
.input, .select { display: block; height: 23px; background: #fff; border: 2px solid #fafafa; border-top-color: #aaa; border-left-color: #aaa; color: #151515; font: 13px/19px "DejaVu Sans", sans-serif; }
.input { width: 436px; }
.input.half { width: 163px; letter-spacing: -.1px; }
.select { width: 96px; padding-left: 4px; display: flex; justify-content: space-between; align-items: center; }
.select b { width: 15px; height: 18px; background: #f2f2f2; border-right: 2px solid #888; border-bottom: 2px solid #888; display: grid; place-items: center; }
.select svg { width: 8px; height: 5px; }
.row.query { height: 76px; }
.input.area { width: 433px; height: 65px; }
.row.actions { height: 46px; }
.actions .field { gap: 3px; }
button { border: 0; padding: 0; height: 27px; background: #57585a; color: #fff; font: bold 13px/27px "DejaVu Sans", sans-serif; }
.submit { width: 64px; } .reset { width: 54px; }
.site footer { height: 82px; background: #a8a894; text-align: center; font-size: 9px; line-height: 12px; padding-top: 21px; }
.links { display: flex; justify-content: center; gap: 4px; color: #cbee8b; padding-right: 2px; letter-spacing: .07px; }
.links a { text-decoration: underline; }
.site p { margin: 8px 0 0; color: red; padding-right: 1px; letter-spacing: -.1px; }
.scrollbar { width: 15px; border-left: 1px solid #999; display: flex; flex-direction: column; }
.scrollbar b { height: 14px; background: #f8f8f8; display: grid; place-items: center; flex: none; }
.scrollbar svg { width: 8px; height: 5px; }
.track { height: 164px; background: #d3d3d3; border: 1px solid #aaa; }
.thumb { flex: 1; border: 1px solid #496987; border-radius: 3px; background: linear-gradient(90deg, #83a1be, #6d8dae 45%, #6180a0 50%, #708fb1); }
.statusbar { height: 24px; border: 1px solid #aaa; border-top: 2px solid #bbb; padding: 1px 7px; line-height: 17px; background: linear-gradient(#f6f6f6 70%, #d2d2d2); flex: none; letter-spacing: -.15px; }
.taskbar { height: 26px; padding-left: 17px; gap: 3px; border-top: 1px solid #fff; }
.task { width: 176px; height: 22px; border: 1px solid #a2a09e; border-radius: 7px; background: linear-gradient(#fff 45%, #f0f0f0 50%, #fafafa); display: flex; align-items: center; gap: 8px; padding: 2px 0 0 6px; flex: none; letter-spacing: -.1px; }
.task svg { width: 16px; height: 16px; margin-top: -2px; }
.faded { opacity: .65; }
.current { background: linear-gradient(#81a0c0, #6c8eaf 45%, #6485a6 50%, #7293b3); border-color: #627f99; }
.task.last { width: 178px; }
.tray { display: flex; align-items: center; gap: 4px; padding-left: 13px; }
.tray svg { width: 21px; height: 21px; }
.tray .small { width: 16px; height: 16px; margin-right: 3px; }
```
